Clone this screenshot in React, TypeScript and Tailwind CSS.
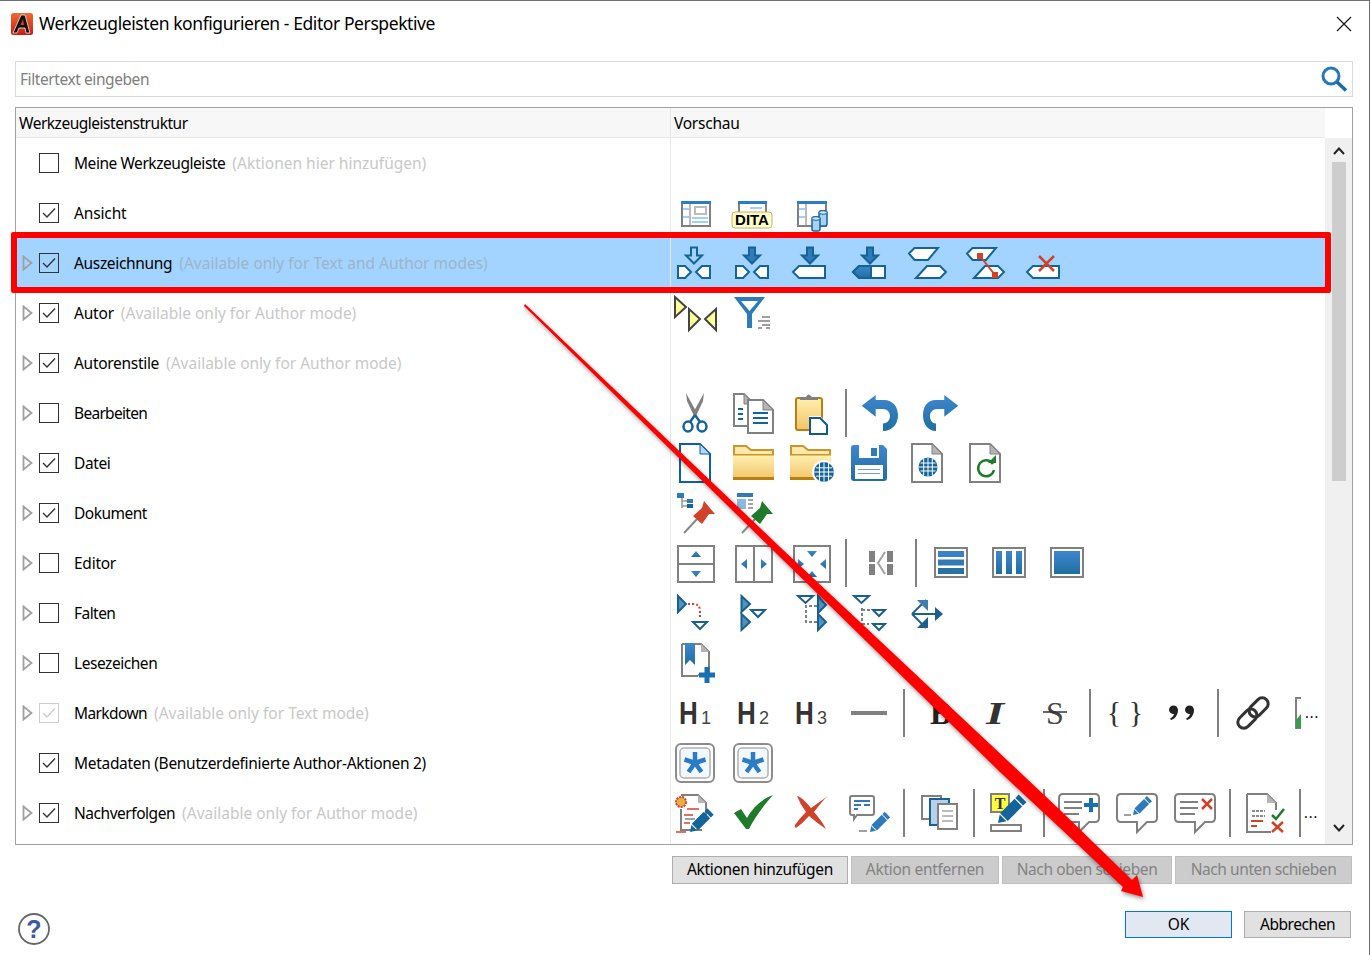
import React from "react";

const I = ({ children, w = 48 }: { children?: React.ReactNode; w?: number }) => (
  <svg width={w} height={48} viewBox={`0 0 ${w} 48`} className="shrink-0">{children}</svg>
);
const Sep = () => <div className="w-[2px] h-12 bg-[#808080] shrink-0" />;
const DB = "#14639b";
const MB = "#2f7ab8";
const GR = "#808080";
const RD = "#d0432a";
const GN = "#1f7a2a";

const Win = () => (
  <>
    <rect x="11" y="13" width="28" height="24" fill="#fff" stroke={GR} strokeWidth="2" />
    <rect x="10" y="12" width="30" height="3" fill="#2a7cc7" />
    <rect x="12" y="19" width="6" height="2" fill="#9fd0f5" />
    <rect x="12" y="27" width="6" height="2" fill="#9fd0f5" />
  </>
);
const DownArrow = ({ cx, filled }: { cx: number; filled?: boolean }) => (
  <path d={`M${cx - 3} 8.5h6v8h5l-8 8-8-8h5z`} fill={filled ? MB : "none"} stroke={DB} strokeWidth="2" />
);
const Tag = ({ x1, x2, y = 27, left = true, fill = "#fff" }: { x1: number; x2: number; y?: number; left?: boolean; fill?: string }) => (
  <path
    d={left
      ? `M${x1} ${y + 6}L${x1 + 6} ${y}H${x2}V${y + 12}H${x1 + 6}z`
      : `M${x1} ${y}H${x2 - 6}L${x2} ${y + 6}L${x2 - 6} ${y + 12}H${x1}z`}
    fill={fill}
    stroke={DB}
    strokeWidth="2"
  />
);
const Split = ({ filled }: { filled?: boolean }) => (
  <I>
    <DownArrow cx={23} filled={filled} />
    <Tag x1={7} x2={20} left={false} />
    <Tag x1={25} x2={39} />
  </I>
);
const Zig = () => (
  <>
    <path d="M6 14.5L11.5 9H35L25 21H11.5z" fill="#fff" stroke={DB} strokeWidth="2" />
    <path d="M13 39L24 27H37L43 33L37 39z" fill="#fff" stroke={DB} strokeWidth="2" />
  </>
);
const Page = ({ x = 9, y = 5, w = 30, h = 38, stroke = GR, fold = "#b5b5b5" }: { x?: number; y?: number; w?: number; h?: number; stroke?: string; fold?: string }) => (
  <>
    <path d={`M${x} ${y}H${x + w - 10}L${x + w} ${y + 10}V${y + h}H${x}z`} fill="#fff" stroke={stroke} strokeWidth="2" />
    <path d={`M${x + w - 10} ${y}V${y + 10}H${x + w}z`} fill={fold} stroke={stroke} strokeWidth="1" />
  </>
);
const Globe = ({ cx, cy, r }: { cx: number; cy: number; r: number }) => (
  <>
    <circle cx={cx} cy={cy} r={r} fill={DB} />
    <path d={`M${cx - r} ${cy}H${cx + r}M${cx} ${cy - r}V${cy + r}M${cx - r + 2} ${cy - r / 2.4}H${cx + r - 2}M${cx - r + 2} ${cy + r / 2.4}H${cx + r - 2}M${cx - r / 2.2} ${cy - r + 1}V${cy + r - 1}M${cx + r / 2.2} ${cy - r + 1}V${cy + r - 1}`} stroke="#fff" strokeWidth="1" />
  </>
);
const Folder = ({ x1 = 5, x2 = 44 }: { x1?: number; x2?: number }) => (
  <>
    <path d={`M${x1} 40V7H${x1 + 12}L${x1 + 17} 11H${x2}V40z`} fill="#ffe9a8" stroke="#c8962c" strokeWidth="2" />
    <rect x={x1 - 1} y="16" width={x2 - x1 + 2} height="25" fill="url(#gFolder)" />
    <rect x={x1 - 1} y="38" width={x2 - x1 + 2} height="3" fill="#b97f10" />
    <rect x={x1 - 1} y="15" width={x2 - x1 + 2} height="1.5" fill="#c8962c" />
  </>
);
const Pin = ({ color }: { color: string }) => (
  <>
    <path d="M13 44L27 29" stroke="#888" strokeWidth="2" />
    <path d="M33 12L44 25L38 25L31 35L22 27L31 19z" fill={color} />
  </>
);
const Pen = ({ x, y, s = 1, c = MB }: { x: number; y: number; s?: number; c?: string }) => (
  <g transform={`translate(${x} ${y}) rotate(-45) scale(${s})`}>
    <path d="M0 0L6 -4V4z" fill={c} />
    <rect x="7" y="-4.5" width="17" height="9" fill={c} />
    <rect x="25" y="-4.5" width="4" height="9" fill={c} />
  </g>
);
const Box = ({ x = 7, y = 7, w = 36, h = 36 }: { x?: number; y?: number; w?: number; h?: number }) => (
  <rect x={x} y={y} width={w} height={h} fill="#fff" stroke={GR} strokeWidth="2" />
);
const T = ({ d, c = "url(#gBlue)" }: { d: string; c?: string }) => <path d={d} fill={c} />;
const OTri = ({ d }: { d: string }) => <path d={d} fill="#fff" stroke="#1d5f8c" strokeWidth="2" />;
const FTri = ({ d }: { d: string }) => <path d={d} fill="#4d93c4" stroke="#1d5f8c" strokeWidth="2" />;
const Head = ({ n }: { n: string }) => (
  <I>
    <text transform="translate(8 35) scale(0.84 1)" fontFamily="'Liberation Sans',sans-serif" fontWeight="700" fontSize="31" fill="#333">H</text>
    <text x="30" y="35" fontFamily="'Liberation Sans',sans-serif" fontSize="18" fill="#444">{n}</text>
  </I>
);
const Star = () => (
  <I>
    <rect x="5" y="5" width="38" height="38" rx="5" fill="#fff" stroke="#8c8c8c" strokeWidth="2" />
    <rect x="9" y="9" width="30" height="30" rx="4" fill="#f3f8fd" stroke="#b0b0b0" strokeWidth="1.5" />
    <path d="M24 13V24M24 24L13.500 20.500M24 24L34.500 20.500M24 24L17.500 33M24 24L30.500 33" stroke="#2a7cc7" strokeWidth="4.5" />
  </I>
);
const Bubble = ({ children }: { children?: React.ReactNode }) => (
  <I>
    <path d="M8 5H40Q44 5 44 9V29Q44 33 40 33H34L24 43V33H8Q4 33 4 29V9Q4 5 8 5z" fill="#fff" stroke={GR} strokeWidth="2" />
    {children}
  </I>
);
const Lines = () => <path d="M9 13H27M9 19H27M9 25H24" stroke={GR} strokeWidth="2" />;
const More = () => <span className="text-[14px] leading-none text-black shrink-0 -ml-[7px] tracking-[1px]">...</span>;

const previews: React.ReactNode[] = [
  null,
  <>
    <I><Win /><rect x="18" y="15" width="2" height="21" fill="#bbb" /><rect x="24" y="18" width="11" height="7" fill="none" stroke="#bbb" strokeWidth="2" /><path d="M21 29H37M21 33H37" stroke="#9fd0f5" strokeWidth="2" /></I>
    <I><rect x="10" y="13" width="27" height="16" fill="#fff" stroke={GR} strokeWidth="2" /><rect x="9" y="12" width="29" height="3" fill="#2a7cc7" /><path d="M21 19H33" stroke="#9fd0f5" strokeWidth="2" /><rect x="3" y="23" width="40" height="16" rx="3" fill="#ffffcc" stroke="#c8b060" /><text x="23" y="36" textAnchor="middle" fontFamily="'Liberation Sans',sans-serif" fontWeight="700" fontSize="15" fill="#000">DITA</text></I>
    <I>
      <Win /><rect x="18" y="15" width="2" height="21" fill="#bbb" />
      <rect x="32" y="22" width="8" height="15" rx="2" fill="#a9d2f2" stroke={DB} strokeWidth="1.5" />
      <ellipse cx="36" cy="23.500" rx="4" ry="1.800" fill="#d5ebfb" stroke={DB} strokeWidth="1" />
      <rect x="25" y="28" width="8" height="14" rx="2" fill="#a9d2f2" stroke={DB} strokeWidth="1.5" />
      <ellipse cx="29" cy="29.500" rx="4" ry="1.800" fill="#d5ebfb" stroke={DB} strokeWidth="1" />
    </I>
  </>,
  <>
    <Split />
    <Split filled />
    <I><DownArrow cx={23} filled /><Tag x1={6} x2={38} /></I>
    <I><DownArrow cx={25} filled /><Tag x1={8} x2={40} /><path d="M8 33L14 27H26V39H14z" fill="url(#gBlue)" stroke={DB} strokeWidth="2" /></I>
    <I><Zig /></I>
    <I><Zig /><path d="M19 17L34 36" stroke={RD} strokeWidth="2" /><rect x="16" y="14" width="6" height="6" fill={RD} /><rect x="31" y="33" width="6" height="6" fill={RD} /></I>
    <I><Tag x1={8} x2={40} /><path d="M20 17L35 32M35 17L20 32" stroke={RD} strokeWidth="2.5" /></I>
  </>,
  <>
    <I>
      <path d="M4 8L15 18L4 28z" fill="#ffff99" stroke="#444" strokeWidth="2" />
      <path d="M18 20L29 30L18 41z" fill="#ffff99" stroke="#444" strokeWidth="2" />
      <path d="M45 20L34 30L45 41z" fill="#ffff99" stroke="#444" strokeWidth="2" />
    </I>
    <I>
      <path d="M5 8H36L23 25V39H18V25z" fill={MB} />
      <path d="M12 12H29L20.500 22z" fill="#fff" />
      <path d="M33 28H41M29 32H41M33 36H41M29 39H33M37 39H41" stroke={GR} strokeWidth="1.500" />
    </I>
  </>,
  null,
  <>
    <I>
      <path d="M15 4L26 24L23 27L16 12z" fill={GR} />
      <path d="M33 4L22 24L25 27L32 12z" fill={GR} />
      <ellipse cx="17" cy="37.500" rx="4.500" ry="5" fill="none" stroke={DB} strokeWidth="2.500" />
      <ellipse cx="31" cy="37.500" rx="4.500" ry="5" fill="none" stroke={DB} strokeWidth="2.500" />
      <path d="M24 26L19 33M24 26L29 33" stroke={DB} strokeWidth="2.500" />
    </I>
    <I>
      <Page x={5} y={5} w={20} h={32} />
      <path d="M9 20H14M9 25H14M9 30H14" stroke={DB} strokeWidth="2" />
      <Page x={19} y={11} w={25} h={33} />
      <path d="M24 24H39M24 29H39M24 34H39" stroke={DB} strokeWidth="2" />
    </I>
    <I>
      <rect x="9" y="9" width="26" height="32" rx="2" fill="url(#gFolder)" stroke="#b97f10" strokeWidth="2" />
      <path d="M13 11V8H19Q21 3 25 8H31V11z" fill={GR} />
      <path d="M22 27H33L42 36V47H22z" fill="#fff" />
      <path d="M23 29H33L40 36V45H23z" fill="#fff" stroke="#0f5a8c" strokeWidth="2" />
    </I>
    <Sep />
    <I>
      <path d="M4.700 16.700L18.700 6V11H27C36 11 41 18 41 26.500C41 35 35 42 26 42V34.500C30 34.500 33 31 33 27C33 23 30 20 26 20H18.700V27.700z" fill="url(#gBlue)" />
    </I>
    <I>
      <path d="M43.300 16.700L29.300 6V11H21C12 11 8 18 8 26.500C8 35 13 42 21 42V34.500C17 34.500 15 31 15 27C15 23 18 20 22 20H29.300V27.700z" fill="url(#gBlue)" />
    </I>
  </>,
  <>
    <I>
      <path d="M9 5H29L39 15V43H9z" fill="#fff" stroke="#0d5fa8" strokeWidth="2" />
      <path d="M29 5V15H39z" fill="#b8d6f0" stroke="#0d5fa8" />
    </I>
    <I><Folder /></I>
    <I>
      <Folder x1={4} x2={43} />
      <circle cx="37" cy="33" r="12" fill="#fff" />
      <Globe cx={37} cy={33} r={10} />
    </I>
    <I>
      <path d="M9 6H38L42 10V39Q42 42 39 42H9Q6 42 6 39V9Q6 6 9 6z" fill="url(#gBlue)" />
      <rect x="14" y="6" width="20" height="13" fill="#fff" />
      <rect x="26" y="9" width="6" height="8" fill={MB} />
      <rect x="10" y="26" width="28" height="14" fill="#fff" />
      <path d="M13 30.500H35M13 34.500H35" stroke="#7a9cc0" strokeWidth="1" />
    </I>
    <I>
      <Page />
      <Globe cx={25} cy={28} r={9.500} />
    </I>
    <I>
      <Page />
      <path d="M32 25A8 8 0 1 0 33 31" fill="none" stroke={GN} strokeWidth="2.500" />
      <path d="M27 24H35V16z" fill={GN} />
    </I>
  </>,
  <>
    <I>
      <rect x="6" y="4" width="7" height="5" fill={MB} />
      <path d="M11 9V19M11 12H16M11 17H16" stroke="#999" strokeWidth="1.500" />
      <rect x="16" y="10" width="6" height="4" fill={MB} />
      <rect x="16" y="15" width="6" height="4" fill={DB} />
      <Pin color={RD} />
    </I>
    <I>
      <rect x="8" y="4" width="16" height="4" fill={MB} />
      <rect x="8" y="10" width="9" height="10" fill="#8db8e0" />
      <path d="M19 11H24M19 15H24M19 19H24" stroke="#888" strokeWidth="1.500" />
      <Pin color={GN} />
    </I>
  </>,
  <>
    <I><Box /><path d="M7 25H43" stroke={GR} strokeWidth="2" /><T d="M20 18L25 12L30 18z" /><T d="M20 32H30L25 38z" /></I>
    <I><Box /><path d="M25 7V43" stroke={GR} strokeWidth="2" /><T d="M18 20V30L12 25z" /><T d="M32 20V30L38 25z" /></I>
    <I><Box /><T d="M20 12H30L25 18z" /><T d="M20 38H30L25 32z" /><T d="M11 20L17 25L11 30z" /><T d="M39 20L33 25L39 30z" /></I>
    <Sep />
    <I>
      <rect x="12" y="12" width="6" height="24" fill={GR} />
      <rect x="30" y="12" width="6" height="24" fill={GR} />
      <path d="M12 24H20M28 24H36" stroke="#fff" strokeWidth="2" />
      <path d="M28 13L21 24L28 35" fill="none" stroke="#a0a0a0" strokeWidth="2" />
    </I>
    <Sep />
    <I><rect x="8" y="9" width="32" height="29" fill="#fff" stroke={GR} strokeWidth="2" /><rect x="11" y="12" width="26" height="6" fill="#3a82c6" /><rect x="11" y="20.500" width="26" height="6" fill="#327ab5" /><rect x="11" y="29" width="26" height="6" fill="#2a72a4" /></I>
    <I><rect x="8" y="9" width="32" height="29" fill="#fff" stroke={GR} strokeWidth="2" /><rect x="11" y="12" width="6" height="23" fill="url(#gBlue)" /><rect x="21" y="12" width="6" height="23" fill="url(#gBlue)" /><rect x="31" y="12" width="6" height="23" fill="url(#gBlue)" /></I>
    <I><rect x="8" y="9" width="32" height="29" fill="#fff" stroke={GR} strokeWidth="2" /><rect x="11" y="12" width="26" height="23" fill="url(#gBlue)" /></I>
  </>,
  <>
    <I>
      <FTri d="M7 7L15 15L7 23z" />
      <path d="M17 15H22Q29 15 29 22V30" fill="none" stroke={RD} strokeWidth="2" strokeDasharray="2 2" />
      <OTri d="M22 33H36L29 40z" />
    </I>
    <I>
      <FTri d="M12.500 7L21 15L12.500 23z" />
      <FTri d="M12.500 25L21 33L12.500 41z" />
      <OTri d="M22 21H36L29 28z" />
    </I>
    <I>
      <OTri d="M11 7H26L18.500 14z" />
      <path d="M30 17H19V33H30" fill="none" stroke={GR} strokeWidth="2" strokeDasharray="3 2" />
      <FTri d="M31 7L39 16L31 24z" />
      <FTri d="M31 25L39 33L31 41z" />
    </I>
    <I>
      <OTri d="M9 7H24L16.500 14z" />
      <path d="M17 19V35M17 21H25M17 35H24" fill="none" stroke={GR} strokeWidth="2" strokeDasharray="3 2" />
      <OTri d="M28 21H40L34 27z" />
      <OTri d="M28 35H40L34 41z" />
    </I>
    <I>
      <path d="M9 25H34" stroke="#1d5f8c" strokeWidth="2" />
      <path d="M9 25L23 11" stroke="#1d5f8c" strokeWidth="2" />
      <path d="M9 25L23 39" stroke="#1d5f8c" strokeWidth="2" />
      <path d="M32 18L40 25L32 32z" fill="#1d5f8c" />
      <path d="M14 11H25V22z" fill="#3a7fb0" />
      <path d="M14 39H25V28z" fill="#1d5f8c" />
    </I>
  </>,
  <>
    <I>
      <path d="M11 5H30L38 13V36H27" fill="none" stroke={GR} strokeWidth="2" />
      <path d="M11 5V37H27" fill="none" stroke={GR} strokeWidth="2" />
      <path d="M30 5V13H38z" fill="#b5b5b5" />
      <path d="M14 4H24V26L19 21L14 26z" fill="url(#gBlue)" />
      <path d="M36 28V44M28 36H44" stroke="#1a6fb0" strokeWidth="5" />
    </I>
  </>,
  <>
    <Head n="1" />
    <Head n="2" />
    <Head n="3" />
    <I><rect x="6" y="22" width="36" height="4" fill={GR} /></I>
    <Sep />
    <I><text x="15" y="35" fontFamily="'Liberation Serif',serif" fontWeight="700" fontSize="32" fill="#222">B</text></I>
    <I><text transform="translate(13 35) scale(1.45 1)" fontFamily="'Liberation Serif',serif" fontWeight="700" fontStyle="italic" fontSize="32" fill="#333">I</text></I>
    <I><text x="24" y="35" textAnchor="middle" fontFamily="'Liberation Serif',serif" fontSize="32" fill="#444">S</text><path d="M12 23H36" stroke="#333" strokeWidth="1.500" /></I>
    <Sep />
    <I><text x="24" y="33" textAnchor="middle" fontFamily="'Liberation Serif',serif" fontSize="30" fill="#333">{"{ }"}</text></I>
    <I>
      <path d="M10 21a4.500 4.500 0 1 1 9 0c0 5-3 9-7 10l-1-1.500c2-1 3.500-2.500 4-4.500a4.500 4.500 0 0 1-5-4z" fill="#222" />
      <path d="M26 21a4.500 4.500 0 1 1 9 0c0 5-3 9-7 10l-1-1.500c2-1 3.500-2.500 4-4.500a4.500 4.500 0 0 1-5-4z" fill="#222" />
    </I>
    <Sep />
    <I>
      <g transform="rotate(-45 24 24)" fill="none" stroke="#333" strokeWidth="3">
        <rect x="5" y="18" width="22" height="12" rx="6" />
        <rect x="21" y="18" width="22" height="12" rx="6" />
      </g>
    </I>
    <I w={15}>
      <path d="M14 9H9V39H14" fill="none" stroke={GR} strokeWidth="2" />
      <path d="M9 39V31L14 25V39z" fill="#3b9a4b" />
    </I>
    <More />
  </>,
  <>
    <Star />
    <Star />
  </>,
  <>
    <I>
      <path d="M10 6H27L35 14V28M31 41H10V20" fill="none" stroke={GR} strokeWidth="2" />
      <path d="M27 6V14H35z" fill="#b5b5b5" />
      <circle cx="10" cy="13" r="5" fill="#e8b040" stroke={RD} strokeWidth="2" strokeDasharray="2 1" />
      <path d="M16 20H28M13 26H22M13 34H19" stroke={RD} strokeWidth="1.500" />
      <path d="M14 30H24" stroke={GR} strokeWidth="1.500" />
      <path d="M5 43H15" stroke={RD} strokeWidth="1.500" />
      <Pen x={19} y={43} s={1} c={DB} />
    </I>
    <I>
      <path d="M5 24L12 20L18 29C24 18 33 10 44 6C35 16 26 28 20 40H17z" fill={GN} />
    </I>
    <I>
      <path d="M10 7Q14 7 24 19L41 7Q36 11 27 23Q35 32 39 40Q30 34 22 27Q16 34 9 39Q7 38 8 36Q12 30 19 23Q13 15 10 7z" fill={RD} />
    </I>
    <I>
      <path d="M7 7H27Q29 7 29 9V24Q29 26 27 26H12L9 30V26H7Q5 26 5 24V9Q5 7 7 7z" fill="#fff" stroke={GR} strokeWidth="2" />
      <path d="M9 12H25M9 16H16M19 16H25M9 20H13" stroke={MB} strokeWidth="2" />
      <path d="M14 42H22" stroke={GR} strokeWidth="1.500" />
      <Pen x={25} y={43} s={0.85} />
    </I>
    <Sep />
    <I>
      <rect x="7" y="7" width="19" height="23" fill="#fff" stroke={GR} strokeWidth="2" />
      <rect x="15" y="10" width="19" height="26" fill="#b8d0ea" stroke={DB} strokeWidth="2" />
      <rect x="23" y="15" width="19" height="25" fill="#fff" stroke={GR} strokeWidth="2" />
      <path d="M27 22H38M27 27H38M27 32H38" stroke="#bbb" strokeWidth="2" />
    </I>
    <Sep />
    <I>
      <rect x="6" y="5" width="18" height="18" fill="#ffff40" stroke={GR} strokeWidth="2" />
      <text x="15" y="20" textAnchor="middle" fontFamily="'Liberation Serif',serif" fontWeight="700" fontSize="16" fill="#333">T</text>
      <rect x="6" y="36" width="30" height="6" fill="#fff" stroke={GR} strokeWidth="2" />
      <Pen x={13} y={34} s={1.200} c={DB} />
    </I>
    <Sep />
    <Bubble>
      <Lines />
      <path d="M36 9V23M29 16H43" stroke="#1a6fb0" strokeWidth="4" />
    </Bubble>
    <Bubble>
      <path d="M11 26H18" stroke={GR} strokeWidth="1.500" />
      <Pen x={20} y={26} s={0.8} />
    </Bubble>
    <Bubble>
      <Lines />
      <path d="M31 10L41 20M41 10L31 20" stroke={RD} strokeWidth="2.500" />
    </Bubble>
    <Sep />
    <I>
      <path d="M6 5H26L35 14V21M6 5V43H30" fill="none" stroke={GR} strokeWidth="2" />
      <path d="M26 5V14H35z" fill="#b5b5b5" />
      <path d="M11 22H24M11 27H24" stroke="#666" strokeWidth="1.500" strokeDasharray="3 1" />
      <path d="M10 32H22M10 37H16" stroke={RD} strokeWidth="1.800" />
      <path d="M31 26L35 30L43 20" fill="none" stroke={GN} strokeWidth="2.500" />
      <path d="M31 33L42 43M42 33L31 43" stroke={RD} strokeWidth="2.500" />
    </I>
    <Sep />
    <More />
  </>,
];

const rows: { name: string; track: string; hint?: string; arrow: boolean; checked: boolean; dim?: boolean; selected?: boolean }[] = [
  { name: "Meine Werkzeugleiste", track: "tracking-[-0.45px]", hint: "(Aktionen hier hinzufügen)", arrow: false, checked: false },
  { name: "Ansicht", track: "tracking-[-0.14px]", arrow: false, checked: true },
  { name: "Auszeichnung", track: "tracking-[-0.33px]", hint: "(Available only for Text and Author modes)", arrow: true, checked: true, selected: true },
  { name: "Autor", track: "tracking-[-0.2px]", hint: "(Available only for Author mode)", arrow: true, checked: true },
  { name: "Autorenstile", track: "tracking-[-0.3px]", hint: "(Available only for Author mode)", arrow: true, checked: true },
  { name: "Bearbeiten", track: "tracking-[-0.7px]", arrow: true, checked: false },
  { name: "Datei", track: "tracking-[-0.4px]", arrow: true, checked: true },
  { name: "Dokument", track: "tracking-[-0.5px]", arrow: true, checked: true },
  { name: "Editor", track: "tracking-[-0.25px]", arrow: true, checked: false },
  { name: "Falten", track: "tracking-[-0.55px]", arrow: true, checked: false },
  { name: "Lesezeichen", track: "tracking-[-0.45px]", arrow: true, checked: false },
  { name: "Markdown", track: "tracking-[-0.6px]", hint: "(Available only for Text mode)", arrow: true, checked: true, dim: true },
  { name: "Metadaten (Benutzerdefinierte Author-Aktionen 2)", track: "tracking-[-0.3px]", arrow: false, checked: true },
  { name: "Nachverfolgen", track: "tracking-[-0.46px]", hint: "(Available only for Author mode)", arrow: true, checked: true },
];

const Check = ({ checked, dim }: { checked: boolean; dim?: boolean }) => (
  <div className={`w-5 h-5 shrink-0 border flex items-center justify-center ${dim ? "border-[#cccccc]" : "border-[#333333]"}`}>
    {checked && (
      <svg width="16" height="16" viewBox="0 0 16 16">
        <path d="M2 8L6 12L14 3.500" fill="none" stroke={dim ? "#cccccc" : "#333333"} strokeWidth="1.400" />
      </svg>
    )}
  </div>
);

const Btn = ({ label, cls, on }: { label: string; cls: string; on?: boolean }) => (
  <div className={`h-[28px] shrink-0 flex items-center justify-center border ${on ? "bg-[#e1e1e1] border-[#adadad] text-black" : "bg-[#cccccc] border-[#bfbfbf] text-[#838383]"} ${cls}`}>
    {label}
  </div>
);

export default function App() {
  return (
    <div className="relative w-[1371px] h-[955px] overflow-hidden bg-white text-[15.500px] text-black font-['Noto_Sans','Open_Sans',sans-serif]">
      <svg width="0" height="0" className="absolute">
        <defs>
          <linearGradient id="gBlue" x1="0" y1="0" x2="0" y2="1">
            <stop offset="0" stopColor="#3f86cf" />
            <stop offset="1" stopColor="#1f6f9f" />
          </linearGradient>
          <linearGradient id="gFolder" x1="0" y1="0" x2="0" y2="1">
            <stop offset="0" stopColor="#fff0b0" />
            <stop offset="1" stopColor="#f2c468" />
          </linearGradient>
        </defs>
      </svg>

      <div className="w-[1370px] h-[955px] border-t border-r border-[#6f6f6f] flex flex-col">
        {/* title bar */}
        <div className="h-[46px] shrink-0 flex items-center pl-[11px] pr-[17px]">
          <svg width="22" height="22" viewBox="0 0 22 22" className="shrink-0">
            <defs>
              <linearGradient id="gLogo" x1="0" y1="0" x2="0" y2="1">
                <stop offset="0" stopColor="#ee6a33" />
                <stop offset="1" stopColor="#c81e12" />
              </linearGradient>
            </defs>
            <rect width="22" height="22" rx="2.500" fill="url(#gLogo)" />
            <path d="M2 20L10 2H14L19 20H15L14 15H8L6 20z" fill="#111" stroke="#fff" strokeWidth="0.700" />
            <path d="M9.500 12H13L12 6z" fill="#e23a1e" />
          </svg>
          <span className="ml-[6px] text-[17.500px] tracking-[-0.42px] leading-none">Werkzeugleisten konfigurieren - Editor Perspektive</span>
          <svg width="16" height="16" viewBox="0 0 16 16" className="ml-auto">
            <path d="M1 1L15 15M15 1L1 15" stroke="#111" strokeWidth="1.100" />
          </svg>
        </div>

        {/* filter */}
        <div className="mt-[14px] ml-[15px] w-[1338px] h-[36px] shrink-0 border border-[#d9d9d9] flex items-center pl-[4px] pr-[3px]">
          <span className="text-[#808080] pt-[2px] tracking-[-0.42px]">Filtertext eingeben</span>
          <svg width="30" height="30" viewBox="0 0 30 30" className="ml-auto">
            <circle cx="12" cy="12" r="8" fill="none" stroke="#2478bc" strokeWidth="3" />
            <path d="M18 18L27 26.500" stroke="#1a6aa0" strokeWidth="3.500" />
          </svg>
        </div>

        {/* table */}
        <div className="mt-[10px] ml-[15px] w-[1338px] h-[738px] shrink-0 border border-[#a0a0a0] flex">
          <div className="w-[1309px] shrink-0 flex flex-col">
            <div className="h-[30px] shrink-0 flex bg-[#f7f7f7] border-b border-[#e8e8e8]">
              <div className="w-[655px] shrink-0 pl-[3px] pt-[2px] flex items-center border-r border-[#e8e8e8] tracking-[-0.48px]">Werkzeugleistenstruktur</div>
              <div className="pl-[3px] pt-[2px] flex items-center tracking-[-0.25px]">Vorschau</div>
            </div>
            {rows.map((r, i) => (
              <div key={r.name} className={`h-[50px] shrink-0 flex overflow-hidden ${r.selected ? "bg-[#a3d4ff]" : ""}`}>
                <div className="w-[655px] shrink-0 flex items-center border-r border-[#e8e8e8]">
                  <div className="w-[23px] shrink-0 flex justify-end pr-[6px]">
                    {r.arrow && (
                      <svg width="11" height="16" viewBox="0 0 11 16">
                        <path d="M1.500 1.500L9.500 8L1.500 14.500z" fill="none" stroke="#a0a0a0" strokeWidth="1.800" />
                      </svg>
                    )}
                  </div>
                  <Check checked={r.checked} dim={r.dim} />
                  <span className={`ml-[15px] pt-[2px] whitespace-nowrap ${r.track}`}>{r.name}</span>
                  {r.hint && <span className={`ml-[7px] pt-[2px] whitespace-nowrap ${r.selected ? "text-[#9cb4c8]" : "text-[#c8c8c8]"}`}>{r.hint}</span>}
                </div>
                <div className="flex-1 min-w-0 flex items-center gap-2.5 overflow-hidden">{previews[i]}</div>
              </div>
            ))}
            <div className="flex-1 w-[655px] border-r border-[#e8e8e8]" />
          </div>
          <div className="flex-1 flex flex-col">
            <div className="h-[30px] shrink-0 bg-white" />
            <div className="flex-1 bg-[#f0f0f0] flex flex-col items-center">
              <svg width="14" height="24" viewBox="0 0 14 24" className="shrink-0">
                <path d="M2 16L7 10.500L12 16" fill="none" stroke="#222" strokeWidth="2" />
              </svg>
              <div className="w-[14px] h-[319px] bg-[#cdcdcd] shrink-0" />
              <svg width="14" height="24" viewBox="0 0 14 24" className="mt-auto shrink-0 mb-[3px]">
                <path d="M2 8L7 13.500L12 8" fill="none" stroke="#222" strokeWidth="2" />
              </svg>
            </div>
          </div>
        </div>

        {/* action buttons */}
        <div className="mt-[11px] h-[29px] shrink-0 flex justify-end gap-[3px] pr-[17px]">
          <Btn label="Aktionen hinzufügen" cls="w-[176px] tracking-[-0.3px]" on />
          <Btn label="Aktion entfernen" cls="w-[148px] tracking-[-0.3px]" />
          <Btn label="Nach oben schieben" cls="w-[170px] tracking-[-0.4px]" />
          <Btn label="Nach unten schieben" cls="w-[177px] tracking-[-0.42px]" />
        </div>

        {/* footer */}
        <div className="flex-1 flex items-start pl-[18px] pr-[18px] pt-[26px]">
          <svg width="33" height="33" viewBox="0 0 33 33" className="shrink-0 mt-[2px]">
            <circle cx="16" cy="16" r="15" fill="#fff" stroke="#666" strokeWidth="1.800" />
            <text x="16" y="25" textAnchor="middle" fontFamily="'Liberation Sans',sans-serif" fontWeight="700" fontSize="25" fill="#3b5aa0">?</text>
          </svg>
          <div className="ml-auto flex gap-3">
            <div className="w-[107px] h-[27px] border border-[#0078d7] bg-[#e1e8f1] flex items-center justify-center">OK</div>
            <div className="w-[107px] h-[27px] border border-[#adadad] bg-[#e1e1e1] flex items-center justify-center tracking-[-0.45px]">Abbrechen</div>
          </div>
        </div>
      </div>

      {/* red highlight over the selected row */}
      <div className="absolute left-[11px] top-[232px] w-[1320px] h-[61px] border-[6px] border-[#ff0000] rounded-[2px] pointer-events-none" />

      {/* annotation arrow */}
      <svg width="1371" height="955" viewBox="0 0 1371 955" className="absolute left-0 top-0 pointer-events-none drop-shadow-[1px_2px_2px_rgba(0,0,0,0.45)]">
        <path d="M525 304L780 547L1000 753.500L1060 810L1132 880L1137 875L1143 897L1121 891L1123 887L1060 828L1000 772L780 557L524 306z" fill="#ff0000" />
      </svg>
    </div>
  );
}
